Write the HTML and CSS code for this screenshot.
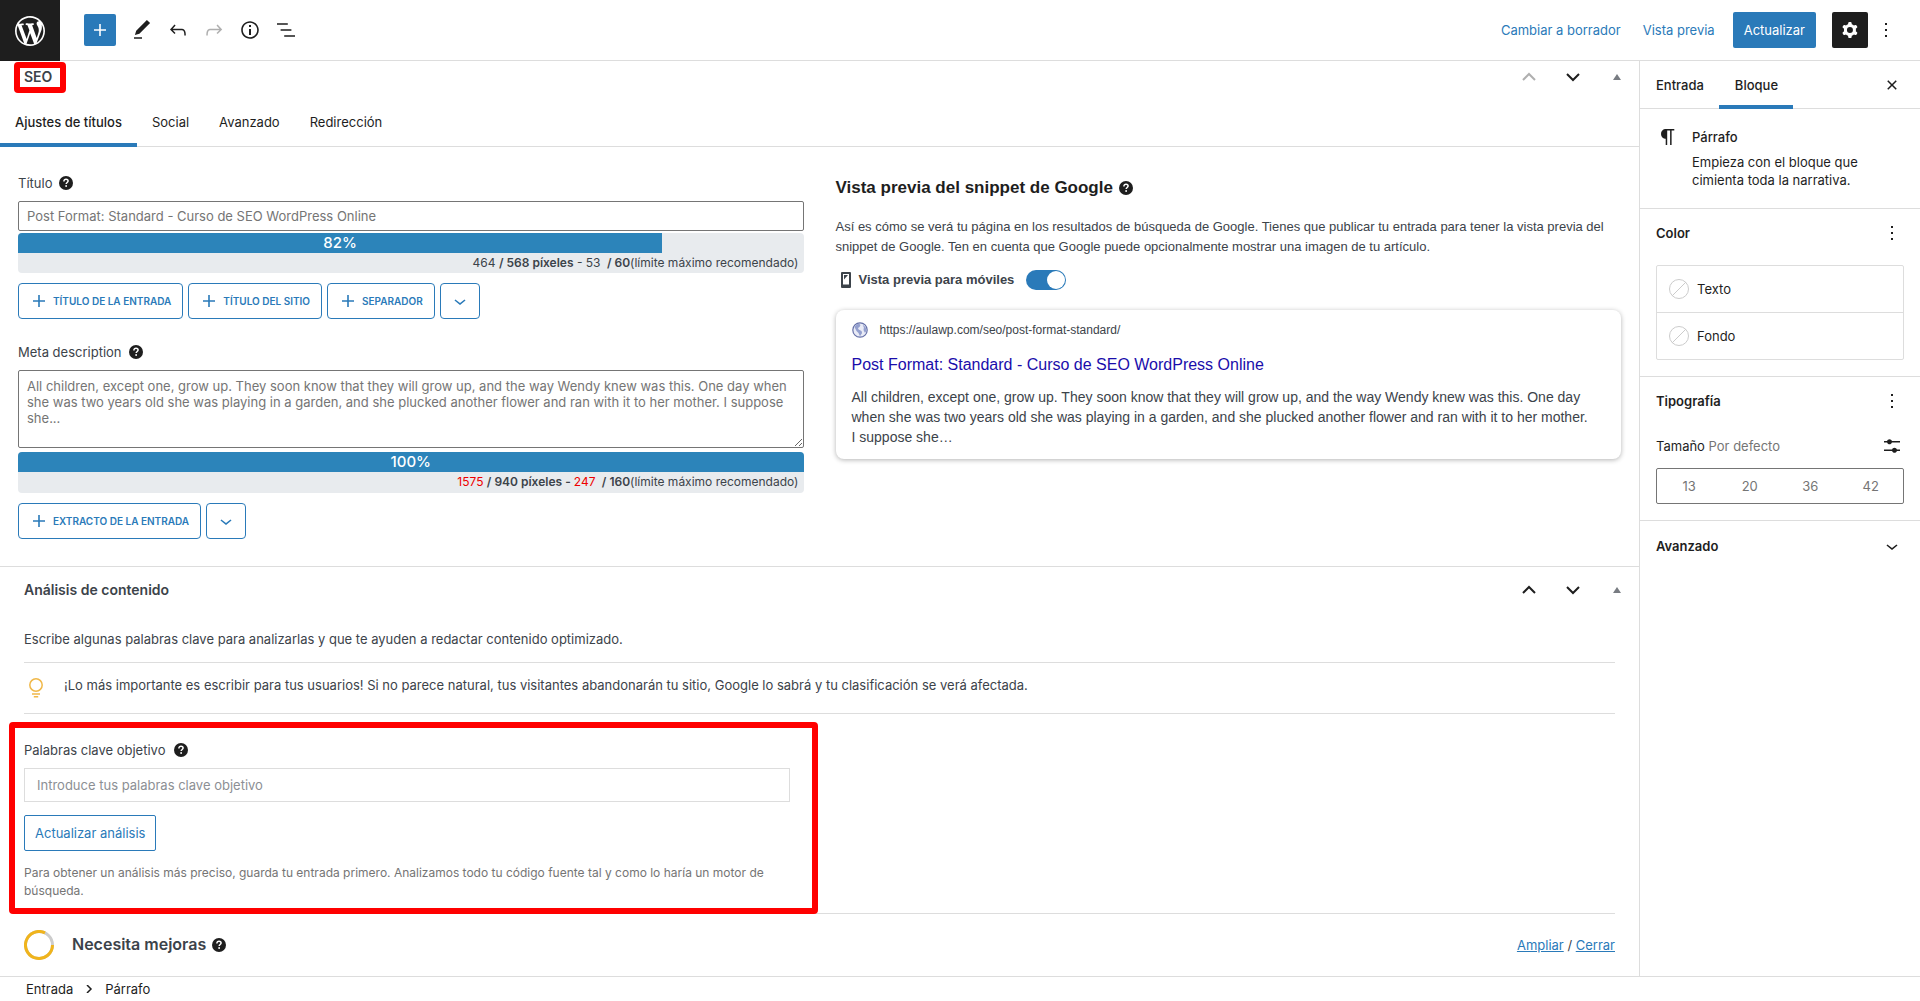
FILE: index.html
```html
<!DOCTYPE html>
<html lang="es">
  <head>
    <meta charset="utf-8">
    <title>Editar entrada</title>
    <link rel="stylesheet" href="styles.css">
  </head>
  <body>
    <!-- Shared icons -->
    <svg class="sprite" aria-hidden="true">
      <symbol id="help" viewBox="0 0 14 14">
        <circle cx="7" cy="7" r="7" fill="#1e1e1e"/>
        <path d="M4.9 5.4C4.9 4 5.8 3.3 7 3.3s2.1.7 2.1 1.8c0 1.4-1.9 1.4-1.9 2.9" fill="none" stroke="#fff" stroke-width="1.5"/>
        <rect x="6.3" y="9.2" width="1.7" height="1.6" fill="#fff"/>
      </symbol>
      <symbol id="plus" viewBox="0 0 24 24"><path d="M18 11.2h-5.2V6h-1.6v5.2H6v1.6h5.2V18h1.6v-5.2H18z"/></symbol>
      <symbol id="dots" viewBox="0 0 24 24"><path d="M13 19h-2v-2h2v2zm0-6h-2v-2h2v2zm0-6h-2V5h2v2z"/></symbol>
      <symbol id="down" viewBox="0 0 24 24"><path d="M17.5 11.6L12 16l-5.5-4.4.9-1.2L12 14l4.5-3.6 1 1.2z"/></symbol>
      <symbol id="arrow-up" viewBox="0 0 14 14"><path d="M1 10l6-6 6 6" fill="none" stroke="currentColor" stroke-width="2"/></symbol>
      <symbol id="arrow-down" viewBox="0 0 14 14"><path d="M1 4l6 6 6-6" fill="none" stroke="currentColor" stroke-width="2"/></symbol>
      <symbol id="toggle" viewBox="0 0 8 6"><path d="M4 0l4 6H0z"/></symbol>
      <symbol id="none" viewBox="0 0 20 20"><path d="M3 17L17 3" stroke="#ccc"/><circle cx="10" cy="10" r="9.5" fill="none" stroke="#ccc"/></symbol>
    </svg>

    <header class="topbar">
      <a class="wp-logo" href="#" aria-label="Ver entradas">
        <svg viewBox="-2 -2 24 24"><path d="M20 10c0-5.51-4.49-10-10-10C4.48 0 0 4.49 0 10c0 5.52 4.48 10 10 10 5.51 0 10-4.48 10-10zM7.78 15.37L4.37 6.22c.55-.02 1.17-.08 1.17-.08.5-.06.44-1.13-.06-1.11 0 0-1.45.11-2.37.11-.18 0-.37 0-.58-.01C4.12 2.69 6.87 1.11 10 1.11c2.33 0 4.45.87 6.05 2.34-.68-.11-1.65.39-1.65 1.58 0 .74.45 1.36.9 2.1.35.61.55 1.36.55 2.46 0 1.49-1.4 5-1.4 5l-3.03-8.37c.54-.02.82-.17.82-.17.5-.05.44-1.25-.06-1.22 0 0-1.44.12-2.38.12-.87 0-2.33-.12-2.33-.12-.5-.03-.56 1.2-.06 1.22l.92.08 1.26 3.41zM17.41 10c.24-.64.74-1.87.43-4.25.7 1.29 1.05 2.71 1.05 4.25 0 3.29-1.73 6.24-4.4 7.78.97-2.59 1.94-5.2 2.92-7.78zM6.1 18.09C3.12 16.65 1.11 13.53 1.11 10c0-1.3.23-2.48.72-3.59C3.25 10.3 4.67 14.2 6.1 18.09zm4.03-6.63l2.58 6.98c-.86.29-1.76.45-2.71.45-.79 0-1.57-.11-2.29-.33.81-2.38 1.62-4.74 2.42-7.1z"/></svg>
      </a>
      <div class="tools">
        <button class="inserter" aria-label="Añadir bloque"><svg><use href="#plus"/></svg></button>
        <button class="icon-btn" aria-label="Herramientas"><svg viewBox="0 0 24 24"><path d="M20.1 5.1L16.9 2 6.2 12.7l-1.3 4.4 4.5-1.3L20.1 5.1zM4 20.8h8v-1.5H4v1.5z"/></svg></button>
        <button class="icon-btn" aria-label="Deshacer"><svg viewBox="0 0 24 24"><path d="M18.3 11.7c-.6-.6-1.4-.9-2.3-.9H6.7l2.9-3.3-1.1-1-4.5 5L8.5 16l1-1-2.7-2.7H16c.5 0 .9.2 1.3.5 1 1 1 3.4 1 4.5v.3h1.5v-.2c0-1.5 0-4.3-1.5-5.7z"/></svg></button>
        <button class="icon-btn faded" aria-label="Rehacer"><svg viewBox="0 0 24 24"><path d="M15.6 6.5l-1.1 1 2.9 3.3H8c-.9 0-1.7.3-2.3.9-1.4 1.5-1.4 4.2-1.4 5.6v.2h1.5v-.3c0-1.1 0-3.5 1-4.5.3-.3.7-.5 1.3-.5h9.2L14.5 15l1.1 1.1 4.6-4.6-4.6-5z"/></svg></button>
        <button class="icon-btn" aria-label="Detalles"><svg viewBox="0 0 24 24"><path d="M12 3.2c-4.8 0-8.8 3.9-8.8 8.8 0 4.8 3.9 8.8 8.8 8.8 4.8 0 8.8-3.9 8.8-8.8 0-4.8-4-8.8-8.8-8.8zm0 16c-4 0-7.2-3.3-7.2-7.2C4.8 8 8 4.8 12 4.8s7.2 3.3 7.2 7.2c0 4-3.2 7.2-7.2 7.2zM11 17h2v-6h-2v6zm0-8h2V7h-2v2z"/></svg></button>
        <button class="icon-btn" aria-label="Vista de lista"><svg viewBox="0 0 24 24"><path d="M13.8 5.2H3v1.5h10.8V5.2zm-3.6 12v1.5H21v-1.5H10.2zm7.2-6H6.6v1.5h10.8v-1.5z"/></svg></button>
      </div>
      <div class="actions">
        <button class="link-btn">Cambiar a borrador</button>
        <button class="link-btn">Vista previa</button>
        <button class="primary-btn">Actualizar</button>
        <button class="settings-btn" aria-label="Ajustes"><svg viewBox="0 0 24 24"><path fill-rule="evenodd" d="M10.289 4.836A1 1 0 0111.275 4h1.306a1 1 0 01.987.836l.244 1.466c.787.26 1.503.679 2.108 1.218l1.393-.522a1 1 0 011.216.437l.653 1.13a1 1 0 01-.23 1.273l-1.148.944a6.025 6.025 0 010 2.435l1.149.946a1 1 0 01.23 1.272l-.653 1.13a1 1 0 01-1.216.437l-1.394-.522c-.605.54-1.32.958-2.108 1.218l-.244 1.466a1 1 0 01-.987.836h-1.306a1 1 0 01-.986-.836l-.244-1.466a5.995 5.995 0 01-2.108-1.218l-1.394.522a1 1 0 01-1.217-.436l-.653-1.131a1 1 0 01.23-1.272l1.149-.946a6.026 6.026 0 010-2.435l-1.148-.944a1 1 0 01-.23-1.272l.653-1.131a1 1 0 011.217-.437l1.393.522a5.994 5.994 0 012.108-1.218l.244-1.466zM14.929 12a3 3 0 11-6 0 3 3 0 016 0z"/></svg></button>
        <button class="icon-btn more" aria-label="Opciones"><svg><use href="#dots"/></svg></button>
      </div>
    </header>

    <div class="workspace">
      <main class="content">
        <section class="metabox">
          <div class="metabox-header">
            <h2 class="marked">SEO</h2>
            <div class="handles">
              <button class="faded" aria-label="Subir"><svg><use href="#arrow-up"/></svg></button>
              <button aria-label="Bajar"><svg><use href="#arrow-down"/></svg></button>
              <button class="toggle-box" aria-label="Alternar panel"><svg><use href="#toggle"/></svg></button>
            </div>
          </div>
          <nav class="seo-tabs">
            <a class="active" href="#">Ajustes de títulos</a>
            <a href="#">Social</a>
            <a href="#">Avanzado</a>
            <a href="#">Redirección</a>
          </nav>
          <div class="seo-body">
            <div class="seo-fields">
              <div class="label-row"><label for="seo-title">Título</label><svg class="help"><use href="#help"/></svg></div>
              <input class="field" id="seo-title" type="text" placeholder="Post Format: Standard - Curso de SEO WordPress Online">
              <div class="meter">
                <div class="meter-bar" style="width: 82%">82%</div>
                <p>464 <b>/ 568 píxeles</b> - 53 <b>&nbsp;/ 60</b>(límite máximo recomendado)</p>
              </div>
              <div class="tags">
                <button class="tag"><svg><use href="#plus"/></svg>TÍTULO DE LA ENTRADA</button>
                <button class="tag"><svg><use href="#plus"/></svg>TÍTULO DEL SITIO</button>
                <button class="tag"><svg><use href="#plus"/></svg>SEPARADOR</button>
                <button class="tag tag-more" aria-label="Más variables"><svg><use href="#down"/></svg></button>
              </div>
              <div class="label-row"><label for="seo-desc">Meta description</label><svg class="help"><use href="#help"/></svg></div>
              <textarea class="field" id="seo-desc" placeholder="All children, except one, grow up. They soon know that they will grow up, and the way Wendy knew was this. One day when she was two years old she was playing in a garden, and she plucked another flower and ran with it to her mother. I suppose she..."></textarea>
              <div class="meter">
                <div class="meter-bar" style="width: 100%">100%</div>
                <p><span class="over">1575</span> <b>/ 940 píxeles - </b><span class="over">247</span> <b>&nbsp;/ 160</b>(límite máximo recomendado)</p>
              </div>
              <div class="tags">
                <button class="tag"><svg><use href="#plus"/></svg>EXTRACTO DE LA ENTRADA</button>
                <button class="tag tag-more" aria-label="Más variables"><svg><use href="#down"/></svg></button>
              </div>
            </div>

            <div class="snippet">
              <h3>Vista previa del snippet de Google <svg class="help"><use href="#help"/></svg></h3>
              <p>Así es cómo se verá tu página en los resultados de búsqueda de Google. Tienes que publicar tu entrada para tener la vista previa del snippet de Google. Ten en cuenta que Google puede opcionalmente mostrar una imagen de tu artículo.</p>
              <label class="mobile-toggle">
                <svg viewBox="0 0 10 16"><path fill-rule="evenodd" d="M1 0h8a1 1 0 011 1v14a1 1 0 01-1 1H1a1 1 0 01-1-1V1a1 1 0 011-1zm1 2v10.500h6V2z"/><path d="M3 3h4L3 7.500z"/></svg>
                Vista previa para móviles
                <input class="switch" type="checkbox" checked>
              </label>
              <div class="result">
                <div class="result-url">
                  <svg viewBox="0 0 16 16"><circle cx="8" cy="8" r="7.200" fill="#e9ebf6" stroke="#6570a8" stroke-width="1.200"/><path d="M2.500 5C3.500 3 5 2 7.200 1.800L8.500 3 7.500 5 6 6l.6 1.600L9.500 9l.6 2L8 14.200 6.500 11 4.500 9zM10.500 2.500l3 2.500 1 3.500-1.500 2.500-1.500-3 .4-2.500z" fill="#94a0cf"/></svg>
                  https://aulawp.com/seo/post-format-standard/
                </div>
                <div class="result-title">Post Format: Standard - Curso de SEO WordPress Online</div>
                <div class="result-text">All children, except one, grow up. They soon know that they will grow up, and the way Wendy knew was this. One day when she was two years old she was playing in a garden, and she plucked another flower and ran with it to her mother. I suppose she…</div>
              </div>
            </div>
          </div>
        </section>

        <section class="metabox">
          <div class="metabox-header">
            <h2>Análisis de contenido</h2>
            <div class="handles">
              <button aria-label="Subir"><svg><use href="#arrow-up"/></svg></button>
              <button aria-label="Bajar"><svg><use href="#arrow-down"/></svg></button>
              <button class="toggle-box" aria-label="Alternar panel"><svg><use href="#toggle"/></svg></button>
            </div>
          </div>
          <div class="analysis">
            <p class="intro">Escribe algunas palabras clave para analizarlas y que te ayuden a redactar contenido optimizado.</p>
            <div class="tip">
              <svg viewBox="0 0 24 24"><path fill="none" stroke="#f0b849" stroke-width="1.500" d="M12 2.800a6.200 6.200 0 100 12.400 6.200 6.200 0 000-12.400zM8 18h8M9.800 20.800h4.400"/></svg>
              <p>¡Lo más importante es escribir para tus usuarios! Si no parece natural, tus visitantes abandonarán tu sitio, Google lo sabrá y tu clasificación se verá afectada.</p>
            </div>
            <div class="keywords">
              <div class="label-row"><label for="kw">Palabras clave objetivo</label><svg class="help"><use href="#help"/></svg></div>
              <input id="kw" type="text" placeholder="Introduce tus palabras clave objetivo">
              <button class="secondary-btn">Actualizar análisis</button>
              <p>Para obtener un análisis más preciso, guarda tu entrada primero. Analizamos todo tu código fuente tal y como lo haría un motor de búsqueda.</p>
            </div>
            <div class="score">
              <svg class="ring" viewBox="0 0 30 30"><circle cx="15" cy="15" r="13.500" fill="none" stroke="#ccc" stroke-width="3"/><path d="M28.500 15A13.500 13.500 0 1121 2.900" fill="none" stroke="#f0b41c" stroke-width="3"/></svg>
              <h3>Necesita mejoras</h3>
              <svg class="help"><use href="#help"/></svg>
              <div class="score-links"><a href="#">Ampliar</a> / <a href="#">Cerrar</a></div>
            </div>
          </div>
        </section>
      </main>

      <aside class="sidebar">
        <div class="side-tabs">
          <button>Entrada</button>
          <button class="active">Bloque</button>
          <button class="close" aria-label="Cerrar ajustes"><svg viewBox="0 0 24 24"><path d="M12 13.060l3.712 3.713 1.061-1.060L13.061 12l3.712-3.712-1.060-1.060L12 10.938 8.288 7.227l-1.061 1.060L10.939 12l-3.712 3.712 1.060 1.061L12 13.061z"/></svg></button>
        </div>
        <div class="block-card">
          <svg viewBox="0 0 24 24"><path d="M18.300 4H9.900v-.1l-.9.2c-2.300.4-4 2.400-4 4.800s1.700 4.400 4 4.800l.7.1V20h1.500V5.500h2.900V20h1.500V5.500h2.700V4z"/></svg>
          <div>
            <h2>Párrafo</h2>
            <p>Empieza con el bloque que cimienta toda la narrativa.</p>
          </div>
        </div>
        <div class="panel">
          <div class="panel-header"><h2>Color</h2><button aria-label="Opciones de color"><svg><use href="#dots"/></svg></button></div>
          <div class="colors">
            <button><svg><use href="#none"/></svg>Texto</button>
            <button><svg><use href="#none"/></svg>Fondo</button>
          </div>
        </div>
        <div class="panel">
          <div class="panel-header"><h2>Tipografía</h2><button aria-label="Opciones de tipografía"><svg><use href="#dots"/></svg></button></div>
          <div class="size-row">
            <span>Tamaño <em>Por defecto</em></span>
            <button aria-label="Tamaño personalizado"><svg viewBox="0 0 24 24"><path d="M14.500 13.800c-1.100 0-2.100.7-2.400 1.800H4V17h8.100c.3 1 1.300 1.800 2.400 1.800s2.100-.7 2.400-1.800H20v-1.500h-3.100c-.3-1-1.300-1.700-2.400-1.700zM11.900 7c-.3-1-1.300-1.800-2.400-1.800S7.400 6 7.100 7H4v1.500h3.100c.3 1 1.300 1.800 2.400 1.800s2.100-.7 2.400-1.800H20V7h-8.100z"/></svg></button>
          </div>
          <div class="sizes">
            <button>13</button>
            <button>20</button>
            <button>36</button>
            <button>42</button>
          </div>
        </div>
        <div class="panel last">
          <div class="panel-header"><h2>Avanzado</h2><button aria-label="Abrir avanzado"><svg><use href="#down"/></svg></button></div>
        </div>
      </aside>
    </div>

    <footer class="breadcrumb">
      <a href="#">Entrada</a>
      <svg viewBox="0 0 8 8"><path d="M2 0l4 4-4 4" fill="none" stroke="#1e1e1e" stroke-width="1.500"/></svg>
      <span>Párrafo</span>
    </footer>
  </body>
</html>
```
FILE: styles.css
```css
* {
  box-sizing: border-box;
}

body {
  margin: 0;
  height: 100vh;
  display: flex;
  flex-direction: column;
  overflow: hidden;
  background: #fff;
  color: #1e1e1e;
  font-family: Inter, "Liberation Sans", sans-serif;
  font-size: 13px;
  line-height: 18px;
}

h2,
h3,
p {
  margin: 0;
}

h2 {
  font-size: 13px;
  font-weight: 600;
}

button {
  display: flex;
  align-items: center;
  justify-content: center;
  padding: 0;
  border: none;
  background: none;
  color: inherit;
  font: inherit;
  cursor: pointer;
}

svg {
  display: block;
  width: 24px;
  height: 24px;
  flex: none;
  fill: currentColor;
}

.sprite {
  position: absolute;
  width: 0;
  height: 0;
}

.faded {
  opacity: 0.35;
}

/* Top bar */
.topbar {
  display: flex;
  align-items: center;
  height: 61px;
  flex: none;
  border-bottom: 1px solid #ddd;
}

.wp-logo {
  display: flex;
  align-items: center;
  justify-content: center;
  width: 60px;
  height: 61px;
  margin-bottom: -1px;
  background: #1e1e1e;
  color: #fff;
}

.wp-logo svg {
  width: 36px;
  height: 36px;
}

.tools {
  display: flex;
  align-items: center;
  margin-left: 24px;
}

.inserter {
  width: 32px;
  height: 32px;
  margin-right: 8px;
  border-radius: 2px;
  background: #2a7ab9;
  color: #fff;
}

.icon-btn {
  width: 36px;
  height: 36px;
}

.actions {
  display: flex;
  align-items: center;
  margin-left: auto;
  padding-right: 16px;
}

.link-btn {
  margin-left: 22px;
  color: #2a7ab9;
}

.primary-btn {
  height: 36px;
  margin-left: 18px;
  padding: 0 11px;
  border-radius: 2px;
  background: #2a7ab9;
  color: #fff;
}

.settings-btn {
  width: 36px;
  height: 36px;
  margin-left: 16px;
  border-radius: 2px;
  background: #1e1e1e;
  color: #fff;
}

/* Main area */
.workspace {
  display: flex;
  flex: 1;
  min-height: 0;
}

.content {
  flex: 1;
  min-width: 0;
  overflow: hidden;
  color: #3c434a;
}

.metabox + .metabox {
  border-top: 1px solid #ddd;
}

.metabox-header {
  display: flex;
  align-items: center;
  justify-content: space-between;
  height: 45px;
  padding: 0 15px 0 24px;
}

.metabox-header h2 {
  position: relative;
  font-size: 14px;
}

.metabox:first-child .metabox-header {
  height: 32px;
}

/* Red frames drawn over the screen */
.marked::after,
.keywords::after {
  content: "";
  position: absolute;
  border: 6px solid #f00;
  border-radius: 4px;
  pointer-events: none;
}

.marked::after {
  inset: -6px -14px -7px -10px;
}

.handles {
  display: flex;
  gap: 30px;
  color: #1e1e1e;
}

.handles svg {
  width: 14px;
  height: 14px;
}

.handles .toggle-box {
  width: 14px;
  color: #787c82;
}

.handles .toggle-box svg {
  width: 8px;
  height: 6px;
}

.seo-tabs {
  display: flex;
  height: 54px;
  border-bottom: 1px solid #ddd;
}

.seo-tabs a {
  height: 54px;
  padding: 20px 15px 0;
  color: #1e1e1e;
  text-decoration: none;
}

.seo-tabs .active {
  border-bottom: 4px solid #2a7ab9;
  font-weight: 500;
}

.seo-body {
  display: grid;
  grid-template-columns: 1fr 1fr;
  gap: 32px;
  padding: 27px 18px 3px;
}

.label-row {
  display: flex;
  align-items: center;
  gap: 7px;
}

.help {
  width: 14px;
  height: 14px;
}

.field {
  display: block;
  width: 100%;
  border: 1px solid #757575;
  border-radius: 2px;
  font: inherit;
  line-height: 16px;
}

input.field {
  height: 30px;
  margin: 9px 0 2px;
  padding: 0 8px;
}

textarea.field {
  height: 78px;
  margin: 9px 0 4px;
  padding: 7px 8px;
}

.field::placeholder {
  color: #757575;
}

.meter {
  overflow: hidden;
  border-radius: 4px;
  background: #e8ebee;
}

.meter-bar {
  height: 20px;
  background: #2c84ba;
  color: #fff;
  font-size: 15px;
  font-weight: 500;
  line-height: 20px;
  text-align: center;
}

.meter p {
  padding-right: 5px;
  font-size: 12px;
  line-height: 20px;
  text-align: right;
}

textarea + .meter {
  padding-bottom: 1px;
}

.meter b {
  font-weight: 600;
}

.over {
  color: #e00;
}

.tags {
  display: flex;
  gap: 5px;
  margin: 10px 0 24px;
}

.tag {
  height: 36px;
  padding: 0 11px 0 8px;
  border: 1px solid #2a7ab9;
  border-radius: 4px;
  color: #2a7ab9;
  font-size: 10px;
  font-weight: 600;
}

.tag svg {
  width: 24px;
  margin-right: 2px;
}

.tag-more {
  width: 40px;
  padding: 0;
}

.tag-more svg {
  margin: 0;
}

/* Google preview */
.snippet {
  font-family: "Liberation Sans", Arial, sans-serif;
}

.snippet h3 {
  display: flex;
  align-items: center;
  gap: 6px;
  margin: 4px 0 19px;
  color: #1e1e1e;
  font-size: 17px;
  line-height: 20px;
}

.snippet p {
  line-height: 20px;
}

.mobile-toggle {
  display: flex;
  align-items: center;
  margin: 13px 0 20px 5px;
  font-weight: bold;
}

.mobile-toggle svg {
  width: 10px;
  height: 16px;
  margin-right: 8px;
}

.switch {
  appearance: none;
  display: flex;
  justify-content: flex-end;
  width: 40px;
  height: 20px;
  margin: 0 0 0 12px;
  padding: 1px;
  border-radius: 10px;
  background: #2a7ab9;
}

.switch::before {
  content: "";
  width: 18px;
  height: 18px;
  border-radius: 50%;
  background: #fff;
}

.result {
  padding: 12px 28px 12px 16px;
  border-radius: 8px;
  box-shadow: 0 1px 5px rgba(0, 0, 0, 0.3);
}

.result-url {
  display: flex;
  align-items: center;
  gap: 12px;
  line-height: 16px;
  font-size: 12px;
}

.result-url svg {
  width: 16px;
  height: 16px;
}

.result-title {
  margin: 17px 0 12px;
  color: #1a0dab;
  font-size: 16px;
  line-height: 20px;
}

.result-text {
  font-size: 14px;
  line-height: 20px;
}

/* Content analysis */
.analysis {
  padding: 0 24px;
}

.intro {
  padding: 18px 0 14px;
}

.tip {
  display: flex;
  gap: 16px;
  padding: 13px 0;
  border: solid #ddd;
  border-width: 1px 0;
}

.keywords {
  position: relative;
  width: 766px;
  max-width: 100%;
  padding: 27px 0 13px;
}

.keywords::after {
  inset: 8px -28px -1px -15px;
}

.keywords .label-row {
  gap: 9px;
}

.keywords input {
  display: block;
  width: 100%;
  height: 34px;
  margin: 9px 0 13px;
  padding: 0 12px;
  border: 1px solid #ddd;
  font: inherit;
}

.keywords input::placeholder {
  color: #8c8f94;
}

.secondary-btn {
  height: 36px;
  padding: 0 10px;
  border: 1px solid #2a7ab9;
  border-radius: 2px;
  color: #2a7ab9;
}

.keywords p {
  margin-top: 13px;
  color: #757575;
  font-size: 12px;
}

.score {
  display: flex;
  align-items: center;
  height: 63px;
  border-top: 1px solid #ddd;
}

.ring {
  width: 30px;
  height: 30px;
  margin-right: 18px;
}

.score h3 {
  margin-right: 6px;
  padding-bottom: 3px;
  font-size: 16px;
  font-weight: 600;
}

.score-links {
  margin-left: auto;
}

.score-links a {
  color: #2a7ab9;
}

/* Settings sidebar */
.sidebar {
  width: 281px;
  flex: none;
  border-left: 1px solid #ddd;
}

.side-tabs {
  display: flex;
  height: 48px;
  border-bottom: 1px solid #ddd;
}

.side-tabs button {
  height: 48px;
  padding: 0 15px 0 16px;
  border: solid transparent;
  border-width: 4px 0;
  font-weight: 500;
}

.side-tabs .active {
  border-bottom-color: #2a7ab9;
}

.side-tabs .close {
  margin-left: auto;
  padding-right: 16px;
}

.block-card {
  display: flex;
  gap: 12px;
  padding: 16px;
}

.block-card h2 {
  margin: 3px 0 7px;
  font-weight: 500;
}

.block-card p {
  margin-bottom: 3px;
}

.panel {
  padding: 12px 16px 16px;
  border-top: 1px solid #ddd;
}

.panel-header,
.size-row {
  display: flex;
  align-items: center;
  justify-content: space-between;
}

.panel-header {
  height: 24px;
}

.panel-header h2 {
  font-weight: 600;
}

.colors {
  margin-top: 20px;
  border: 1px solid #ddd;
  border-radius: 2px;
}

.colors button {
  width: 100%;
  height: 46px;
  padding: 0 12px;
  justify-content: flex-start;
  gap: 8px;
}

.colors button + button {
  height: 47px;
  border-top: 1px solid #ddd;
}

.colors svg {
  width: 20px;
  height: 20px;
}

.size-row {
  margin: 21px 0 10px;
}

.size-row em {
  color: #757575;
  font-style: normal;
}

.sizes {
  display: flex;
  height: 36px;
  padding: 0 2px;
  border: 1px solid #757575;
  border-radius: 2px;
}

.sizes button {
  flex: 1;
  color: #757575;
}

.panel.last {
  padding-top: 13px;
}

/* Footer */
.breadcrumb {
  display: flex;
  align-items: center;
  gap: 12px;
  height: 25px;
  flex: none;
  padding-left: 26px;
  border-top: 1px solid #ddd;
}

.breadcrumb a {
  color: inherit;
  text-decoration: none;
}

.breadcrumb svg {
  width: 8px;
  height: 8px;
}
```
